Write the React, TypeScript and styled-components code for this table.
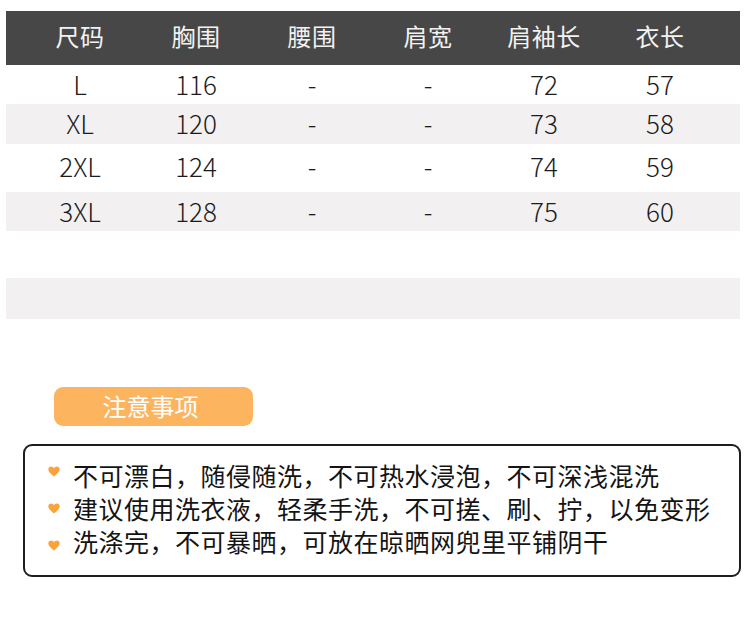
import styled, { createGlobalStyle } from "styled-components";

const GlobalStyle = createGlobalStyle`
  body {
    margin: 0;
    background: #ffffff;
    font-family: "Noto Sans CJK SC", "Noto Sans", sans-serif;
  }
`;

const Page = styled.div`
  width: 750px;
  height: 621px;
  padding-top: 11px;
  box-sizing: border-box;
  display: flex;
  flex-direction: column;
`;

const Table = styled.div`
  margin-left: 6px;
  width: 734px;
  display: flex;
  flex-direction: column;
`;

const Row = styled.div<{ $h: number; $shade?: boolean }>`
  display: grid;
  grid-template-columns: repeat(6, 116px);
  padding-left: 16px;
  align-items: center;
  height: ${(p) => p.$h}px;
  background: ${(p) => (p.$shade ? "#f2f0f0" : "#ffffff")};
`;

const HeadRow = styled(Row)`
  background: #474747;
`;

const HeadCell = styled.div`
  text-align: center;
  font-size: 24px;
  color: #f2f2f2;
  letter-spacing: 0.5px;
  padding-bottom: 5px;
`;

const Cell = styled.div`
  text-align: center;
  font-size: 26px;
  font-weight: 300;
  color: #1c1c1c;
  padding-bottom: 5px;
`;

const Tag = styled.div`
  margin: 68px 0 0 54px;
  width: 199px;
  height: 39px;
  border-radius: 9px;
  background: #fdb45f;
  color: #ffffff;
  font-size: 24px;
  display: flex;
  align-items: center;
  justify-content: center;
  padding: 0 6px 3px 0;
  box-sizing: border-box;
`;

const NoteBox = styled.div`
  margin: 18px 0 0 23px;
  width: 718px;
  height: 133px;
  box-sizing: border-box;
  border: 2px solid #1e1e1e;
  border-radius: 9px;
  padding: 12px 0 0 23px;
  display: flex;
  flex-direction: column;
`;

const Note = styled.div`
  display: flex;
  align-items: center;
  height: 33px;
  gap: 13px;
  font-size: 25px;
  color: #141414;
  letter-spacing: 0.5px;
`;

const Heart = styled.svg<{ $dy: number }>`
  width: 12px;
  height: 11px;
  flex: none;
  transform: translateY(${(p) => p.$dy}px);
`;

const head = ["尺码", "胸围", "腰围", "肩宽", "肩袖长", "衣长"];

const rows = [
  { h: 39, cells: ["L", "116", "-", "-", "72", "57"] },
  { h: 40, cells: ["XL", "120", "-", "-", "73", "58"] },
  { h: 48, cells: ["2XL", "124", "-", "-", "74", "59"] },
  { h: 39, cells: ["3XL", "128", "-", "-", "75", "60"] },
  { h: 47, cells: [] },
  { h: 41, cells: [] },
];

const notes = [
  { text: "不可漂白，随侵随洗，不可热水浸泡，不可深浅混洗", dy: -3 },
  { text: "建议使用洗衣液，轻柔手洗，不可搓、刷、拧，以免变形", dy: 1 },
  { text: "洗涤完，不可暴晒，可放在晾晒网兜里平铺阴干", dy: 5 },
];

function HeartIcon({ dy }: { dy: number }) {
  return (
    <Heart $dy={dy} viewBox="0 0 12 11">
      <path
        d="M6 10.5 C2.5 7.6 0.3 5.7 0.3 3.3 C0.3 1.6 1.6 0.4 3.1 0.4 C4.3 0.4 5.4 1.1 6 2.2 C6.6 1.1 7.7 0.4 8.9 0.4 C10.4 0.4 11.7 1.6 11.7 3.3 C11.7 5.7 9.5 7.6 6 10.5 Z"
        fill="#fca23b"
      />
    </Heart>
  );
}

export default function App() {
  return (
    <Page>
      <GlobalStyle />
      <Table>
        <HeadRow $h={54}>
          {head.map((h) => (
            <HeadCell key={h}>{h}</HeadCell>
          ))}
        </HeadRow>
        {rows.map((r, i) => (
          <Row key={i} $h={r.h} $shade={i % 2 === 1}>
            {r.cells.map((c, j) => (
              <Cell key={j}>{c}</Cell>
            ))}
          </Row>
        ))}
      </Table>
      <Tag>注意事项</Tag>
      <NoteBox>
        {notes.map((n) => (
          <Note key={n.text}>
            <HeartIcon dy={n.dy} />
            {n.text}
          </Note>
        ))}
      </NoteBox>
    </Page>
  );
}
